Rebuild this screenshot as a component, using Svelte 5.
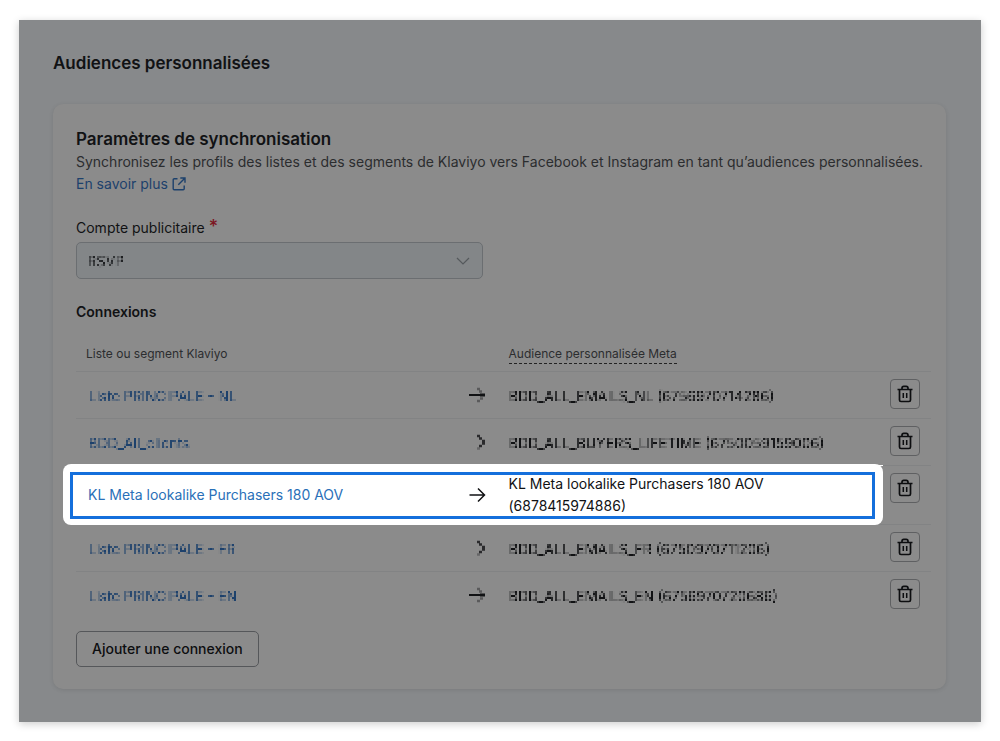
<script>
  let account = 'RSVP';

  const connections = [
    { list: 'Liste PRINCIPALE - NL', audience: 'BDD_ALL_EMAILS_NL (6756970714286)', hidden: true, arrow: 'full' },
    { list: 'BDD_All_clients', audience: 'BDD_ALL_BUYERS_LIFETIME (6750059159006)', hidden: true, arrow: 'head' },
    { list: 'KL Meta lookalike Purchasers 180 AOV', audience: 'KL Meta lookalike Purchasers 180 AOV (6878415974886)', active: true },
    { list: 'Liste PRINCIPALE - FR', audience: 'BDD_ALL_EMAILS_FR (6750970711206)', hidden: true, arrow: 'head' },
    { list: 'Liste PRINCIPALE - EN', audience: 'BDD_ALL_EMAILS_EN (6756970720686)', hidden: true, arrow: 'full' },
  ];
</script>

<svg class="defs" width="0" height="0" aria-hidden="true">
  <filter id="mosaic" x="0" y="0" width="100%" height="100%" color-interpolation-filters="sRGB">
    <feGaussianBlur in="SourceGraphic" stdDeviation="0.5" result="soft" />
    <feFlood x="0" y="0" width="1" height="1" />
    <feComposite x="0" y="0" width="2" height="2" />
    <feTile result="grid" />
    <feComposite in="soft" in2="grid" operator="in" result="dots" />
    <feOffset in="dots" dx="1" dy="0" result="right" />
    <feMerge result="pair">
      <feMergeNode in="dots" />
      <feMergeNode in="right" />
    </feMerge>
    <feOffset in="pair" dx="0" dy="1" result="down" />
    <feMerge>
      <feMergeNode in="pair" />
      <feMergeNode in="down" />
    </feMerge>
  </filter>
</svg>

<main class="page">
  <h1>Audiences personnalisées</h1>

  <section class="card">
    <h2>Paramètres de synchronisation</h2>
    <p class="intro">
      Synchronisez les profils des listes et des segments de Klaviyo vers Facebook et Instagram en tant qu’audiences personnalisées.
      <a class="more" href="#learn">En savoir plus
        <svg width="14" height="14" viewBox="0 0 14 14" fill="none" stroke="currentColor" stroke-width="1.4" aria-hidden="true">
          <path d="M5.5 1.7H2.2a1 1 0 0 0-1 1v9a1 1 0 0 0 1 1h9a1 1 0 0 0 1-1V8.5M8.3 1h4.7v4.7M13 1L6.3 7.7" />
        </svg>
      </a>
    </p>

    <label for="account">Compte publicitaire <span class="required">*</span></label>
    <div class="select">
      <select id="account" bind:value={account}>
        <option>RSVP</option>
      </select>
      <svg width="14" height="8" viewBox="0 0 14 8" fill="none" stroke="currentColor" stroke-width="1.2" aria-hidden="true">
        <path d="M1 1l6 6 6-6" />
      </svg>
    </div>

    <h3>Connexions</h3>
    <table>
      <thead>
        <tr>
          <th>Liste ou segment Klaviyo</th>
          <th class="arrow"></th>
          <th class="audience"><span class="hint">Audience personnalisée Meta</span></th>
          <th class="actions"></th>
        </tr>
      </thead>
      <tbody>
        {#each connections as item}
          <tr class:active={item.active}>
            <td class="list"><a class:mosaic={item.hidden} href="#list">{item.list}</a></td>
            <td class="arrow">
              <svg width="18" height="18" viewBox="0 0 18 18" fill="none" stroke="currentColor" aria-hidden="true">
                {#if item.arrow === 'full'}
                  <path d="M1 9h12" stroke-width="2" />
                  <path d="M12 9h5" stroke-width="3" />
                  <path d="M9 3h3M11 5.5h3M12 12.5h3M9 15h3" stroke-width="2.5" opacity="0.4" />
                {:else if item.arrow === 'head'}
                  <path d="M9 3h3M11 5.5h3M14 8h3M14 10.5h3M11 13h3" stroke-width="2.5" opacity="0.8" />
                  <path d="M9 15.5h3" stroke-width="2.5" opacity="0.3" />
                {:else}
                  <path d="M1.5 9h15M10 2.5L16.5 9 10 15.5" stroke-width="1.5" />
                {/if}
              </svg>
            </td>
            <td class="audience"><span class:mosaic={item.hidden}>{item.audience}</span></td>
            <td class="actions">
              <button class="delete" aria-label="Supprimer">
                <svg width="18" height="18" viewBox="0 0 18 18" fill="none" stroke="currentColor" stroke-width="1.7" aria-hidden="true">
                  <path d="M1.5 4.5h15M6 4.5V3.2Q6 1.3 7.8 1.3h2.4Q12 1.3 12 3.2v1.3M3.5 4.5V15q0 1.5 1.5 1.5h8q1.5 0 1.5-1.5V4.5" />
                  <path d="M7.3 8v5M10.7 8v5" stroke-width="1.5" />
                </svg>
              </button>
            </td>
          </tr>
        {/each}
      </tbody>
    </table>

    <button class="add">Ajouter une connexion</button>
  </section>
</main>

<style>
  :global(body) {
    background: #fff;
  }
  .defs {
    position: absolute;
  }
  .page {
    margin: 20px 19px 19px;
    padding: 30px 35px 33px 34px;
    background: #87898b;
    box-shadow: 0 2px 8px rgba(0, 0, 0, 0.2);
    font: 14px/22px Inter, "Liberation Sans", sans-serif;
    color: #111214;
  }
  h1,
  h2,
  h3,
  p {
    margin: 0;
  }
  h1 {
    font-size: 17px;
    line-height: 26px;
    font-weight: 600;
  }
  .card {
    margin-top: 28px;
    padding: 23px 15px 22px 23px;
    border-radius: 10px;
    background: #8b8b8b;
    box-shadow: 0 1px 4px rgba(0, 0, 0, 0.1);
  }
  h2 {
    font-size: 17px;
    line-height: 24px;
    font-weight: 600;
  }
  .intro {
    color: #2b2d2f;
  }
  a {
    color: #1d416c;
    text-decoration: none;
  }
  .more {
    display: flex;
    align-items: center;
    gap: 4px;
  }
  label {
    display: block;
    margin-top: 22px;
  }
  .required {
    font-size: 18px;
    line-height: 18px;
    font-weight: 500;
    color: #7c1522;
  }
  .select {
    display: flex;
    align-items: center;
    box-sizing: border-box;
    width: 407px;
    max-width: 100%;
    height: 37px;
    margin-top: 3px;
    padding: 0 12px 0 10px;
    border: 1px solid #6b6e71;
    border-radius: 5px;
    background: #838688;
    color: #55595c;
  }
  select {
    flex: 1;
    height: 22px;
    padding: 0;
    border: 0;
    background: none;
    appearance: none;
    font: inherit;
    color: #1c1e20;
    filter: url(#mosaic);
  }
  h3 {
    margin-top: 22px;
    font-size: 14px;
    line-height: 22px;
    font-weight: 600;
  }
  table {
    width: 100%;
    margin-top: 14px;
    border-collapse: separate;
    border-spacing: 0;
    table-layout: fixed;
  }
  th {
    height: 34px;
    padding: 0 0 0 10px;
    font-size: 12px;
    line-height: 18px;
    font-weight: 400;
    text-align: left;
    color: #2b2d2f;
  }
  .hint {
    padding-bottom: 2px;
    border-bottom: 1px dashed #222;
  }
  td {
    height: 46px;
    padding: 0;
    border-top: 1px solid #828384;
  }
  td.list {
    padding-left: 12px;
  }
  .arrow {
    width: 54px;
    padding: 0 0 0 15px;
    box-sizing: border-box;
  }
  .arrow svg,
  .delete svg,
  .more svg {
    display: block;
  }
  .audience {
    padding: 0 0 0 2px;
  }
  td.audience {
    padding-right: 60px;
  }
  .actions {
    width: 48px;
    padding: 7px 0 0 7px;
    box-sizing: border-box;
    vertical-align: top;
  }
  .mosaic {
    display: inline-block;
    vertical-align: middle;
    white-space: nowrap;
    filter: url(#mosaic);
  }
  .delete {
    display: grid;
    place-items: center;
    width: 30px;
    height: 30px;
    padding: 0;
    border: 1px solid #5f6062;
    border-radius: 4px;
    background: none;
    color: #0d0e10;
  }
  .active {
    position: relative;
    z-index: 0;
  }
  .active td {
    height: 58px;
  }
  .active td:not(.actions) {
    border-top-color: #fff;
  }
  .active a {
    color: #2a70b8;
  }
  .active .list::before,
  .active .list::after {
    content: "";
    position: absolute;
    z-index: -1;
  }
  .active .list::before {
    inset: -1px 48px -1px -13px;
    border-radius: 8px;
    background: #fff;
  }
  .active .list::after {
    inset: 7px 56px 5px -6px;
    border: 3px solid #146fdc;
  }
  .add {
    height: 36px;
    margin-top: 13px;
    padding: 0 15px;
    border: 1px solid #55575a;
    border-radius: 5px;
    background: none;
    font: 500 14px/22px Inter, "Liberation Sans", sans-serif;
    color: #0d0e10;
  }
</style>
